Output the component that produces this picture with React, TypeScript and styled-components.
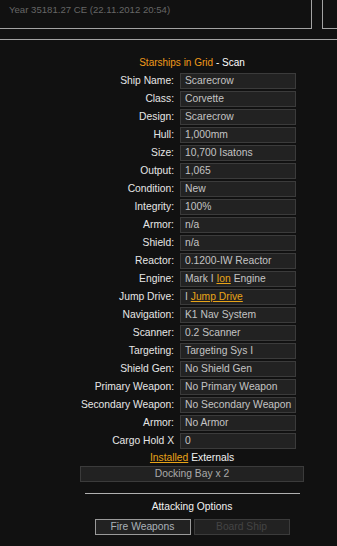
import React from 'react'
import styled, { createGlobalStyle } from 'styled-components'

type Row = { label: string; value: React.ReactNode }

const App = () => {
  const rows: Row[] = [
    { label: 'Ship Name:', value: 'Scarecrow' },
    { label: 'Class:', value: 'Corvette' },
    { label: 'Design:', value: 'Scarecrow' },
    { label: 'Hull:', value: '1,000mm' },
    { label: 'Size:', value: '10,700 Isatons' },
    { label: 'Output:', value: '1,065' },
    { label: 'Condition:', value: 'New' },
    { label: 'Integrity:', value: '100%' },
    { label: 'Armor:', value: 'n/a' },
    { label: 'Shield:', value: 'n/a' },
    { label: 'Reactor:', value: '0.1200-IW Reactor' },
    { label: 'Engine:', value: <>Mark I <Link>Ion</Link> Engine</> },
    { label: 'Jump Drive:', value: <>I <Link>Jump Drive</Link></> },
    { label: 'Navigation:', value: 'K1 Nav System' },
    { label: 'Scanner:', value: '0.2 Scanner' },
    { label: 'Targeting:', value: 'Targeting Sys I' },
    { label: 'Shield Gen:', value: 'No Shield Gen' },
    { label: 'Primary Weapon:', value: 'No Primary Weapon' },
    { label: 'Secondary Weapon:', value: 'No Secondary Weapon' },
    { label: 'Armor:', value: 'No Armor' },
    { label: 'Cargo Hold X', value: '0' },
  ]

  return (
    <Page>
      <GlobalStyle />
      <Header>
        <Clock>Year 35181.27 CE (22.11.2012 20:54)</Clock>
        <SidePanel />
      </Header>
      <Rule />
      <Main>
        <Title>
          <Orange>Starships in Grid</Orange> - Scan
        </Title>
        <Form>
          {rows.map((r, i) => (
            <React.Fragment key={i}>
              <Label>{r.label}</Label>
              <Value>{r.value}</Value>
            </React.Fragment>
          ))}
        </Form>
        <Externals>
          <Link>Installed</Link> Externals
        </Externals>
        <Bar>Docking Bay x 2</Bar>
        <Divider />
        <Section>Attacking Options</Section>
        <Buttons>
          <Button>Fire Weapons</Button>
          <Button disabled>Board Ship</Button>
        </Buttons>
      </Main>
    </Page>
  )
}

export default App

const GlobalStyle = createGlobalStyle`
  html, body {
    margin: 0;
    padding: 0;
    background: #111111;
    overflow: hidden;
  }
  body {
    font-family: "Liberation Sans", Arial, sans-serif;
    font-size: 10.3px;
    color: #e2e2e2;
  }
`
const Page = styled.div`
  width: 337px;
  height: 546px;
  overflow: hidden;
`
const Header = styled.div`
  display: flex;
  gap: 10px;
  height: 29px;
`
const Clock = styled.div`
  flex: 0 0 312px;
  box-sizing: border-box;
  border-right: 1px solid #a3a3a3;
  border-bottom: 1px solid #a3a3a3;
  padding: 4px 0 0 9px;
  color: #666;
  font-size: 9.6px;
  line-height: 12px;
`
const SidePanel = styled.div`
  flex: 1;
  border-left: 1px solid #a3a3a3;
  border-bottom: 1px solid #a3a3a3;
`
const Rule = styled.div`
  margin-top: 10px;
  height: 1px;
  background: #a3a3a3;
`
const Main = styled.div`
  width: 384px;
  display: flex;
  flex-direction: column;
  align-items: center;
`
const Title = styled.div`
  margin-top: 16px;
  font-size: 10px;
  line-height: 13px;
  color: #fff;
`
const Orange = styled.span`
  color: #f09a1a;
`
const Link = styled.span`
  color: #e8a418;
  text-decoration: underline;
`
const Form = styled.div`
  margin-top: 4px;
  width: 224px;
  display: grid;
  grid-template-columns: 94px 116px;
  column-gap: 6px;
  row-gap: 2px;
`
const Label = styled.div`
  height: 16px;
  line-height: 16px;
  text-align: right;
  white-space: nowrap;
  color: #e6e6e6;
`
const Value = styled.div`
  box-sizing: border-box;
  height: 16px;
  line-height: 14px;
  padding-left: 4px;
  background: #222;
  border: 1px solid #3b3b3b;
  color: #c4c4c4;
  white-space: nowrap;
  overflow: hidden;
`
const Externals = styled.div`
  margin-top: 2px;
  line-height: 14px;
  color: #f2f2f2;
`
const Bar = styled.div`
  box-sizing: border-box;
  margin-top: 1px;
  width: 224px;
  height: 16px;
  line-height: 14px;
  text-align: center;
  background: #222;
  border: 1px solid #3b3b3b;
  color: #aaa;
`
const Divider = styled.div`
  margin-top: 11px;
  width: 215px;
  height: 1px;
  background: #b0b0b0;
`
const Section = styled.div`
  margin-top: 6px;
  line-height: 13px;
  color: #f2f2f2;
`
const Buttons = styled.div`
  margin-top: 6px;
  display: flex;
  gap: 3px;
`
const Button = styled.button`
  box-sizing: border-box;
  width: 96px;
  height: 16px;
  padding: 0;
  margin: 0;
  font-family: inherit;
  font-size: 10.3px;
  line-height: 14px;
  background: #222;
  border: 1px solid #9a9a9a;
  color: #a9b1b8;
  &:disabled {
    border-color: #3b3b3b;
    color: #444;
  }
`
